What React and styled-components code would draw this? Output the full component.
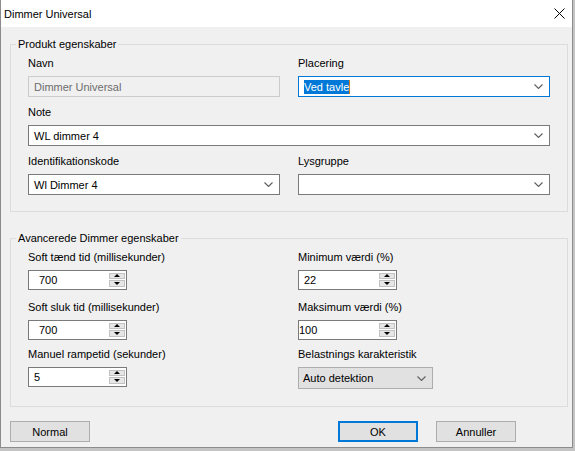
import React from 'react';
import styled, { createGlobalStyle } from 'styled-components';

const GlobalStyle = createGlobalStyle`
  html, body {
    margin: 0;
    padding: 0;
  }
  body {
    width: 575px;
    height: 451px;
    overflow: hidden;
    background: #c4c4c4;
    font-family: "Liberation Sans", Arial, sans-serif;
    font-size: 11px;
    color: #000;
  }
`;

const Window = styled.div`
  box-sizing: border-box;
  width: 573px;
  height: 448px;
  background: #f0f0f0;
  border: 1px solid #8c8c8c;
  border-top: none;
  display: flex;
  flex-direction: column;
`;

const TitleBar = styled.div`
  height: 27px;
  background: #fff;
  display: flex;
  align-items: center;
  justify-content: space-between;
  padding: 0 7px 0 3px;
`;

const Body = styled.div`
  display: flex;
  flex-direction: column;
  padding: 0 4px 0 9px;
`;

const GroupBox = styled.div`
  display: flex;
  flex-direction: column;
  margin-top: ${(p) => p.$top}px;
  border: 1px solid #dcdcdc;
  padding: 0 16px ${(p) => p.$bottom}px 17px;
`;

const GroupTitle = styled.div`
  align-self: flex-start;
  margin: -9px 0 0 -12px;
  padding: 0 2px;
  line-height: 16px;
  background: #f0f0f0;
`;

const FieldGrid = styled.div`
  display: grid;
  grid-template-columns: 252px 252px;
  column-gap: 18px;
  row-gap: ${(p) => p.$rowGap}px;
  margin-top: ${(p) => p.$top}px;
`;

const Field = styled.div`
  display: flex;
  flex-direction: column;
  gap: 5px;
  grid-column: ${(p) => (p.$wide ? '1 / 3' : 'auto')};
  margin-top: ${(p) => p.$extra || 0}px;
`;

const Label = styled.div`
  line-height: 16px;
  white-space: nowrap;
`;

const TextBox = styled.div`
  box-sizing: border-box;
  height: 21px;
  display: flex;
  align-items: center;
  padding: 0 6px 0 5px;
  background: ${(p) => (p.$disabled ? '#f0f0f0' : '#fff')};
  border: 1px solid ${(p) => (p.$disabled ? '#cccccc' : p.$focused ? '#0078d7' : '#7a7a7a')};
  color: ${(p) => (p.$disabled ? '#6d6d6d' : '#000')};
`;

const ComboText = styled.span`
  flex: 1;
  white-space: nowrap;
`;

const Highlight = styled.span`
  background: #0078d7;
  color: #fff;
  padding: 1px 0;
  border-right: 1px solid #d4801e;
`;

const SpinBox = styled.div`
  box-sizing: border-box;
  width: 99px;
  height: 20px;
  display: flex;
  align-items: center;
  background: #fff;
  border: 1px solid #7a7a7a;
  padding: 0 1px 0 ${(p) => p.$pad}px;
`;

const SpinValue = styled.span`
  flex: 1;
`;

const SpinButtons = styled.div`
  display: flex;
  flex-direction: column;
  gap: 1px;
  width: 16px;
  height: 14px;
  margin-bottom: 1px;
`;

const SpinHalf = styled.div`
  flex: 1;
  display: flex;
  align-items: center;
  justify-content: center;
  background: #e6e6e6;
  border: 1px solid #c2c2c2;
  box-sizing: border-box;
  &::after {
    content: '';
    border-left: 3px solid transparent;
    border-right: 3px solid transparent;
    ${(p) => (p.$down ? 'border-top: 3px solid #000;' : 'border-bottom: 3px solid #000;')}
  }
`;

const DropButton = styled.div`
  box-sizing: border-box;
  width: 135px;
  height: 22px;
  display: flex;
  align-items: center;
  padding: 0 6px 0 4px;
  background: #e1e1e1;
  border: 1px solid #adadad;
`;

const ButtonRow = styled.div`
  display: flex;
  align-items: center;
  gap: 18px;
  margin: 14px 52px 0 0;
`;

const Button = styled.div`
  box-sizing: border-box;
  width: 80px;
  height: 21px;
  display: flex;
  align-items: center;
  justify-content: center;
  background: #e1e1e1;
  border: ${(p) => (p.$default ? '2px solid #0078d7' : '1px solid #adadad')};
  margin-left: ${(p) => (p.$push ? 'auto' : '0')};
`;

const Chevron = () => (
  <svg width="9" height="5" viewBox="0 0 9 5">
    <polyline points="0.5,0.5 4.5,4.5 8.5,0.5" fill="none" stroke="#5f5f5f" strokeWidth="1.1" />
  </svg>
);

const CloseIcon = () => (
  <svg width="11" height="11" viewBox="0 0 11 11">
    <path d="M0.5 0.5 L10.5 10.5 M10.5 0.5 L0.5 10.5" stroke="#000" strokeWidth="1" />
  </svg>
);

function Combo({ value, focused, children }) {
  return (
    <TextBox $focused={focused}>
      <ComboText>{children || value}</ComboText>
      <Chevron />
    </TextBox>
  );
}

function Spin({ value, pad }) {
  return (
    <SpinBox $pad={pad}>
      <SpinValue>{value}</SpinValue>
      <SpinButtons>
        <SpinHalf />
        <SpinHalf $down />
      </SpinButtons>
    </SpinBox>
  );
}

export default function App() {
  return (
    <>
      <GlobalStyle />
      <Window>
        <TitleBar>
          <span>Dimmer Universal</span>
          <CloseIcon />
        </TitleBar>
        <Body>
          <GroupBox $top={17} $bottom={16}>
            <GroupTitle>Produkt egenskaber</GroupTitle>
            <FieldGrid $top={3} $rowGap={7}>
              <Field>
                <Label>Navn</Label>
                <TextBox $disabled>Dimmer Universal</TextBox>
              </Field>
              <Field>
                <Label>Placering</Label>
                <Combo focused>
                  <Highlight>Ved tavle</Highlight>
                </Combo>
              </Field>
              <Field $wide>
                <Label>Note</Label>
                <Combo value="WL dimmer 4" />
              </Field>
              <Field>
                <Label>Identifikationskode</Label>
                <Combo value="Wl Dimmer 4" />
              </Field>
              <Field>
                <Label>Lysgruppe</Label>
                <Combo value="" />
              </Field>
            </FieldGrid>
          </GroupBox>

          <GroupBox $top={26} $bottom={17}>
            <GroupTitle>Avancerede Dimmer egenskaber</GroupTitle>
            <FieldGrid $top={3} $rowGap={5}>
              <Field>
                <Label>Soft tænd tid (millisekunder)</Label>
                <Spin value="700" pad={10} />
              </Field>
              <Field>
                <Label>Minimum værdi (%)</Label>
                <Spin value="22" pad={5} />
              </Field>
              <Field $extra={4}>
                <Label>Soft sluk tid (millisekunder)</Label>
                <Spin value="700" pad={10} />
              </Field>
              <Field $extra={4}>
                <Label>Maksimum værdi (%)</Label>
                <Spin value="100" pad={0} />
              </Field>
              <Field $extra={1}>
                <Label>Manuel rampetid (sekunder)</Label>
                <Spin value="5" pad={5} />
              </Field>
              <Field $extra={1}>
                <Label>Belastnings karakteristik</Label>
                <DropButton>
                  <ComboText>Auto detektion</ComboText>
                  <Chevron />
                </DropButton>
              </Field>
            </FieldGrid>
          </GroupBox>

          <ButtonRow>
            <Button>Normal</Button>
            <Button $push $default>OK</Button>
            <Button>Annuller</Button>
          </ButtonRow>
        </Body>
      </Window>
    </>
  );
}
